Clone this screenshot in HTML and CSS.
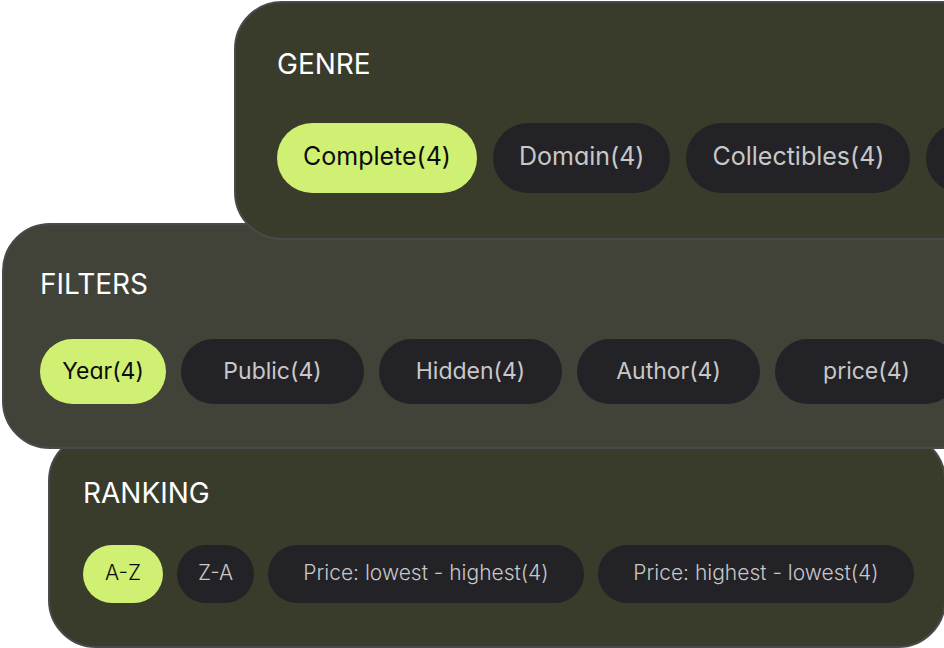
FILE: index.html
```html
<!DOCTYPE html>
<html lang="en">
<head>
<meta charset="utf-8">
<meta name="viewport" content="width=device-width, initial-scale=1">
<title>Filters</title>
<link rel="stylesheet" href="styles.css">
</head>
<body>
<main class="stack">
  <section class="panel panel-genre" aria-labelledby="genre-title">
    <h2 class="title" id="genre-title">GENRE</h2>
    <div class="chips">
      <button class="chip active" type="button" aria-pressed="true">Complete(4)</button>
      <button class="chip" type="button" aria-pressed="false">Domain(4)</button>
      <button class="chip" type="button" aria-pressed="false">Collectibles(4)</button>
      <button class="chip" type="button" aria-pressed="false" aria-label="More"></button>
    </div>
  </section>
  <section class="panel panel-filters" aria-labelledby="filters-title">
    <h2 class="title" id="filters-title">FILTERS</h2>
    <div class="chips">
      <button class="chip active" type="button" aria-pressed="true">Year(4)</button>
      <button class="chip" type="button" aria-pressed="false">Public(4)</button>
      <button class="chip" type="button" aria-pressed="false">Hidden(4)</button>
      <button class="chip" type="button" aria-pressed="false">Author(4)</button>
      <button class="chip" type="button" aria-pressed="false">price(4)</button>
    </div>
  </section>
  <section class="panel panel-ranking" aria-labelledby="ranking-title">
    <h2 class="title" id="ranking-title">RANKING</h2>
    <div class="chips">
      <button class="chip short active" type="button" aria-pressed="true">A-Z</button>
      <button class="chip short" type="button" aria-pressed="false">Z-A</button>
      <button class="chip" type="button" aria-pressed="false">Price: lowest - highest(4)</button>
      <button class="chip" type="button" aria-pressed="false">Price: highest - lowest(4)</button>
    </div>
  </section>
</main>
</body>
</html>
```
FILE: styles.css
```css
* {
  box-sizing: border-box;
}

body {
  margin: 0;
  background: #fff;
  font-family: Inter, "Liberation Sans", sans-serif;
}

.stack {
  display: flex;
  flex-direction: column;
  padding-top: 1px;
  overflow: hidden;
}

.panel {
  position: relative;
  border: 2px solid #4a4a4b;
  border-radius: 48px;
  background: #393b2b;
}

/* Each panel tucks under the one above it. */
.panel-genre {
  z-index: 3;
  margin-left: 234px;
  margin-right: -80px;
  padding: 44px 0 45px 41px;
}

.panel-filters {
  z-index: 2;
  margin: -17px -80px 0 2px;
  padding: 42px 0 43px 36px;
  background: #414339;
}

.panel-ranking {
  z-index: 1;
  margin: -16px -2px 0 48px;
  padding: 41px 0 43px 33px;
}

.title {
  margin: 0;
  font-size: 28px;
  line-height: 34px;
  font-weight: 400;
  color: #fff;
}

.chips {
  display: flex;
}

.chip {
  flex: none;
  border: 0;
  border-radius: 35px;
  background: #232227;
  color: #c8c8c8;
  font-family: inherit;
  font-weight: 400;
  font-feature-settings: "cv11";
  white-space: nowrap;
}

.active {
  background: #d0f073;
  color: #0c0c0c;
}

.panel-genre .chips {
  gap: 16px;
  margin-top: 42px;
}

.panel-genre .chip {
  min-width: 176px;
  height: 70px;
  padding: 0 26px 4px;
  font-size: 25px;
}

.panel-filters .chips {
  gap: 15px;
  margin-top: 38px;
}

.panel-filters .chip {
  width: 183px;
  height: 65px;
  padding: 0 0 2px;
  font-size: 23px;
}

.panel-filters .active {
  width: 126px;
}

.panel-ranking .chips {
  gap: 14px;
  margin-top: 35px;
}

.panel-ranking .chip {
  width: 316px;
  height: 58px;
  padding: 0 0 3px;
  font-size: 21px;
  font-weight: 300;
}

.panel-ranking .short {
  width: 77px;
  font-feature-settings: "case";
}

.panel-ranking .active {
  width: 80px;
}
```
